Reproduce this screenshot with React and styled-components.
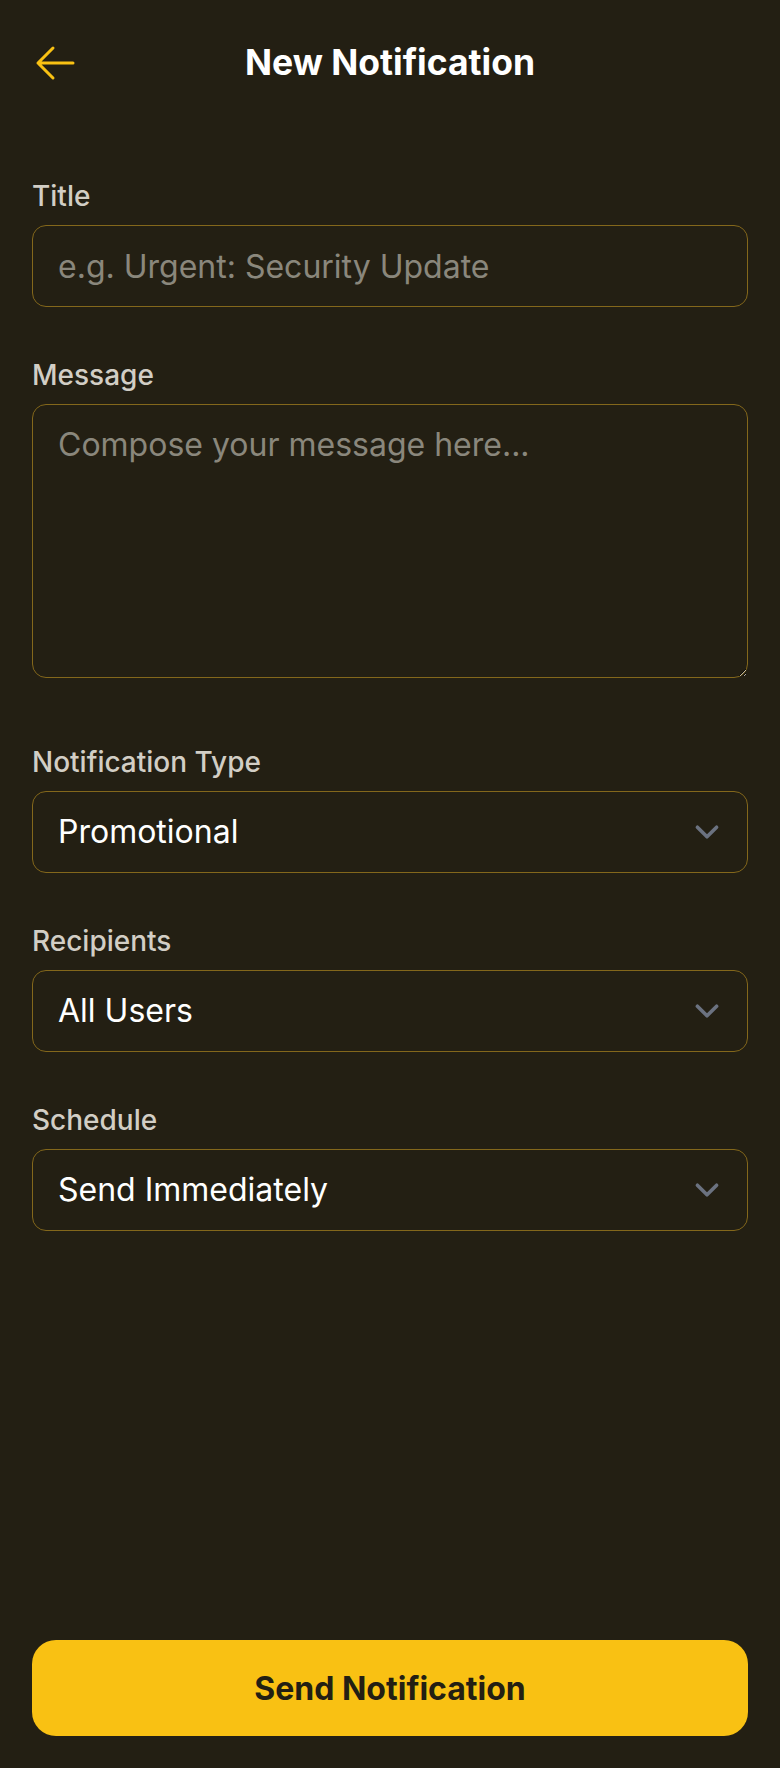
import React from "react";
import styled, { createGlobalStyle } from "styled-components";

const colors = {
  bg: "#231f13",
  primary: "#f9c113",
  border: "#83671b",
  label: "#d2cec5",
  placeholder: "#8a877c",
  chevron: "#6b7280",
};

const GlobalStyle = createGlobalStyle`
  html, body {
    margin: 0;
    padding: 0;
    background: ${colors.bg};
  }
  body {
    font-family: Inter, "Noto Sans", "Liberation Sans", sans-serif;
    -webkit-font-smoothing: antialiased;
  }
  * {
    box-sizing: border-box;
  }
`;

const Page = styled.div`
  min-height: 100vh;
  display: flex;
  flex-direction: column;
  background: ${colors.bg};
`;

const Header = styled.header`
  height: 126px;
  padding: 0 32px;
  display: grid;
  grid-template-columns: 48px 1fr 48px;
  align-items: center;
`;

const BackButton = styled.button`
  width: 48px;
  height: 48px;
  padding: 0;
  border: 0;
  background: transparent;
  display: flex;
  align-items: center;
  justify-content: center;
  cursor: pointer;
`;

const HeaderTitle = styled.h1`
  margin: 0;
  text-align: center;
  color: #fff;
  font-size: 35.5px;
  line-height: 48px;
  font-weight: 700;
`;

const Form = styled.form`
  flex: 1;
  padding: 50px 32px 0;
  display: flex;
  flex-direction: column;
  gap: 48px;
`;

const Field = styled.div`
  display: flex;
  flex-direction: column;
`;

const Label = styled.label`
  color: ${colors.label};
  font-size: 28px;
  line-height: 40px;
  font-weight: 500;
  margin-bottom: 9px;
`;

const controlStyles = `
  width: 100%;
  margin: 0;
  border: 1px solid ${colors.border};
  border-radius: 14px;
  background: ${colors.bg};
  color: #fff;
  font-family: inherit;
  font-size: 32px;
  line-height: 48px;
  padding: 16px 25px;
  outline: none;
  &::placeholder {
    color: ${colors.placeholder};
    opacity: 1;
  }
`;

const TextInput = styled.input`
  ${controlStyles}
  height: 82px;
`;

const TextArea = styled.textarea`
  ${controlStyles}
  display: block;
  height: 274px;
  margin-bottom: 16px;
  resize: vertical;
`;

const SelectWrap = styled.div`
  position: relative;
`;

const Select = styled.select`
  ${controlStyles}
  height: 82px;
  appearance: none;
  -webkit-appearance: none;
  padding-right: 72px;
`;

const Chevron = styled.svg`
  position: absolute;
  right: 17px;
  top: 50%;
  width: 48px;
  height: 48px;
  transform: translateY(-50%);
  pointer-events: none;
`;

const Footer = styled.div`
  padding: 0 32px 32px;
`;

const SubmitButton = styled.button`
  width: 100%;
  height: 96px;
  border: 0;
  border-radius: 24px;
  background: ${colors.primary};
  color: ${colors.bg};
  font-family: inherit;
  font-size: 32px;
  font-weight: 700;
  cursor: pointer;
`;

const SelectField = ({ label, options }) => (
  <Field>
    <Label>{label}</Label>
    <SelectWrap>
      <Select defaultValue={options[0]}>
        {options.map((o) => (
          <option key={o}>{o}</option>
        ))}
      </Select>
      <Chevron viewBox="0 0 20 20" fill="none">
        <path
          d="M6 8l4 4 4-4"
          stroke={colors.chevron}
          strokeWidth="1.5"
          strokeLinecap="round"
          strokeLinejoin="round"
        />
      </Chevron>
    </SelectWrap>
  </Field>
);

const App = () => {
  return (
    <Page>
      <GlobalStyle />
      <Header>
        <BackButton type="button" aria-label="Back">
          <svg width="48" height="48" viewBox="0 0 48 48" fill="none">
            <path
              d="M41 24H6M21 9L6 24l15 15"
              stroke={colors.primary}
              strokeWidth="3"
              strokeLinecap="round"
              strokeLinejoin="round"
            />
          </svg>
        </BackButton>
        <HeaderTitle>New Notification</HeaderTitle>
        <div />
      </Header>

      <Form onSubmit={(e) => e.preventDefault()}>
        <Field>
          <Label>Title</Label>
          <TextInput placeholder="e.g. Urgent: Security Update" />
        </Field>
        <Field>
          <Label>Message</Label>
          <TextArea placeholder="Compose your message here..." />
        </Field>
        <SelectField
          label="Notification Type"
          options={["Promotional", "System Alert", "Reminder"]}
        />
        <SelectField
          label="Recipients"
          options={["All Users", "Active Users", "New Users"]}
        />
        <SelectField
          label="Schedule"
          options={["Send Immediately", "Schedule for Later"]}
        />
      </Form>

      <Footer>
        <SubmitButton type="button">Send Notification</SubmitButton>
      </Footer>
    </Page>
  );
};

export default App;
